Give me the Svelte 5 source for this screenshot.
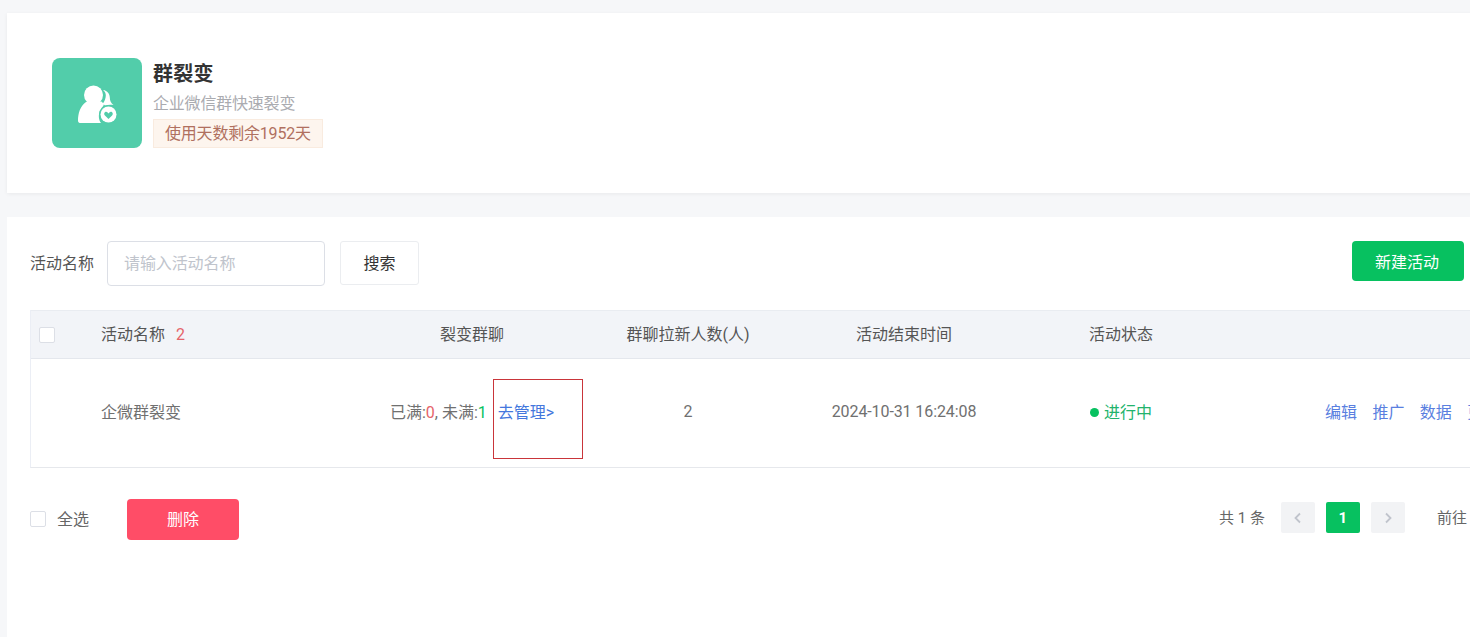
<script lang="ts">
  const columns = ['活动名称', '裂变群聊', '群聊拉新人数(人)', '活动结束时间', '活动状态'];
  const actions = ['编辑', '推广', '数据', '更多'];
</script>

<div class="page">
  <section class="app-card">
    <div class="app-icon">
      <svg width="46" height="46" viewBox="0 0 46 46" fill="#fff">
        <circle cx="19.500" cy="15" r="9.500" />
        <path d="M12 22C6 26 4 34 4 40.500 4 42.500 5 43 7 43H27c-2.500-3-3-9-.5-13 1.500-2.500 3-4 3.500-6-1-.7-1.700-1.500-2.500-2.500z" />
        <path d="M29 10c4.500.5 6.800 4 6.800 7.500 0 3 1.200 5.500 3.700 7.500-3-.7-6-.3-8.500.5-.8-.8-1.500-1.400-2.200-1.800 1.800-2.400 3-5.500 3-8.200 0-2-.7-4.100-2.800-5.500z" />
        <circle cx="34.500" cy="34.500" r="9.500" fill="#52cdaa" />
        <circle cx="34.500" cy="34.500" r="8" />
        <path d="M34.500 39l-3.600-3.500c-2-2.100.8-4.900 2.700-3l.9.900.9-.9c1.900-1.900 4.700.9 2.700 3z" fill="#52cdaa" />
      </svg>
    </div>
    <div class="app-info">
      <h1>群裂变</h1>
      <p>企业微信群快速裂变</p>
      <span class="days-tag">使用天数剩余1952天</span>
    </div>
  </section>

  <section class="list-card">
    <div class="toolbar">
      <label class="search-label" for="activity-name">活动名称</label>
      <input id="activity-name" class="search-input" placeholder="请输入活动名称" />
      <button class="search-btn">搜索</button>
      <button class="create-btn">新建活动</button>
    </div>

    <div class="table">
      <div class="row head">
        <div class="cell select"><span class="checkbox"></span></div>
        <div class="cell name">{columns[0]}<em>2</em></div>
        <div class="cell center">{columns[1]}</div>
        <div class="cell center">{columns[2]}</div>
        <div class="cell center">{columns[3]}</div>
        <div class="cell status">{columns[4]}</div>
        <div class="cell"></div>
      </div>
      <div class="row body">
        <div class="cell select"></div>
        <div class="cell name">企微群裂变</div>
        <div class="cell center">
          已满:<span class="red">0</span>, 未满:<span class="green">1</span>
          <span class="manage">去管理&gt;<i class="highlight"></i></span>
        </div>
        <div class="cell center">2</div>
        <div class="cell center date">2024-10-31 16:24:08</div>
        <div class="cell status running"><b></b>进行中</div>
        <div class="cell actions">
          {#each actions as action}
            <span>{action}</span>
          {/each}
        </div>
      </div>
    </div>

    <div class="footer">
      <span class="checkbox small"></span>
      <span class="select-all">全选</span>
      <button class="delete-btn">删除</button>
      <div class="pager">
        <span class="total">共 1 条</span>
        <span class="page-btn">
          <svg width="10" height="12" viewBox="0 0 10 12"><path d="M7 1.500 2.500 6 7 10.500" fill="none" stroke="#c0c4cc" stroke-width="1.800"/></svg>
        </span>
        <span class="page-btn active">1</span>
        <span class="page-btn">
          <svg width="10" height="12" viewBox="0 0 10 12"><path d="M3 1.500 7.500 6 3 10.500" fill="none" stroke="#c0c4cc" stroke-width="1.800"/></svg>
        </span>
        <span class="jump">前往</span>
      </div>
    </div>
  </section>
</div>

<style>
  :global(body) {
    margin: 0;
    background: #f6f7f9;
    overflow: hidden;
  }

  .page {
    width: 1470px;
    height: 637px;
    overflow: hidden;
    padding: 13px 0 0 7px;
    box-sizing: border-box;
    font-family: Roboto, "Noto Sans CJK SC", sans-serif;
    font-size: 16px;
    color: #707070;
  }

  .app-card {
    width: 1600px;
    height: 180px;
    background: #fff;
    box-shadow: 0 1px 4px rgba(0, 0, 0, 0.06);
    display: flex;
    align-items: center;
    padding-left: 45px;
    box-sizing: border-box;
    gap: 11px;
  }

  .app-icon {
    width: 90px;
    height: 90px;
    background: #52cdaa;
    border-radius: 8px;
    display: flex;
    align-items: center;
    justify-content: center;
  }

  .app-info {
    display: flex;
    flex-direction: column;
    align-items: flex-start;
    padding-top: 1px;
  }

  h1 {
    margin: 0;
    font-size: 20px;
    line-height: 30px;
    font-weight: 700;
    letter-spacing: 0.2px;
    color: #333;
  }

  .app-info p {
    margin: 0;
    line-height: 30px;
    letter-spacing: -0.2px;
    color: #aaabb0;
  }

  .days-tag {
    height: 27px;
    line-height: 27px;
    padding: 0 11px;
    background: #fdf5ee;
    border: 1px solid #f9ebdf;
    color: #b0705f;
    letter-spacing: -0.2px;
  }

  .list-card {
    width: 1600px;
    height: 420px;
    margin-top: 24px;
    background: #fff;
    padding: 24px 0 0 23px;
    box-sizing: border-box;
  }

  .toolbar {
    display: flex;
    align-items: flex-start;
    height: 69px;
  }

  .search-label {
    line-height: 46px;
    color: #555;
    margin-right: 13px;
  }

  .search-input {
    width: 218px;
    height: 45px;
    box-sizing: border-box;
    border: 1px solid #dcdfe6;
    border-radius: 4px;
    padding: 0 16px;
    font: inherit;
    letter-spacing: -0.1px;
    outline: none;
  }

  .search-input::placeholder {
    color: #c0c4cc;
  }

  .search-btn {
    width: 79px;
    height: 44px;
    margin-left: 15px;
    padding: 0 0 3px;
    background: #fff;
    border: 1px solid #ebedf0;
    border-radius: 3px;
    font: inherit;
    color: #333;
  }

  .create-btn {
    width: 112px;
    height: 40px;
    margin-left: 933px;
    padding: 0 2px 0 0;
    background: #07c160;
    border: none;
    border-radius: 4px;
    font: inherit;
    color: #fff;
  }

  .table {
    width: 1560px;
    border-left: 1px solid #ebeef5;
    border-bottom: 1px solid #e6e8ec;
  }

  .row {
    display: grid;
    grid-template-columns: 70px 260px 222px 210px 222px 212px 1fr;
    align-items: center;
  }

  .head {
    height: 49px;
    background: #f2f4f8;
    border-top: 1px solid #e9ecf1;
    border-bottom: 1px solid #e4e7ed;
    color: #555;
    box-sizing: border-box;
  }

  .body {
    height: 108px;
  }

  .name,
  .center,
  .status,
  .actions {
    padding-bottom: 4px;
  }

  .select {
    padding-left: 8px;
  }

  .checkbox {
    display: block;
    width: 14px;
    height: 14px;
    background: #fff;
    border: 1px solid #dcdfe6;
    border-radius: 2px;
  }

  .name em {
    font-style: normal;
    color: #e5646a;
    margin-left: 11px;
  }

  .center {
    text-align: center;
    white-space: nowrap;
  }

  .date {
    letter-spacing: -0.1px;
  }

  .status {
    padding-left: 75px;
  }

  .head .status {
    padding-left: 74px;
  }

  .red {
    color: #e5646a;
  }

  .green {
    color: #07c160;
  }

  .manage {
    position: relative;
    margin-left: 7px;
    color: #4477dd;
  }

  /* red annotation frame that was drawn over the screenshot */
  .highlight {
    position: absolute;
    left: -5px;
    top: -24px;
    width: 88px;
    height: 78px;
    border: 1px solid #c9353a;
  }

  .running {
    color: #22b36c;
    display: flex;
    align-items: center;
    white-space: nowrap;
  }

  .running b {
    width: 9px;
    height: 9px;
    margin: 2px 5px 0 0;
    border-radius: 50%;
    background: #07c160;
  }

  .actions {
    display: flex;
    gap: 15.4px;
    padding-left: 98px;
    color: #5a7fe0;
    white-space: nowrap;
  }

  .footer {
    display: flex;
    align-items: center;
    width: 1440px;
    height: 41px;
    margin-top: 31px;
  }

  .checkbox.small {
    margin: -1px 11px 0 0;
  }

  .select-all {
    color: #666;
    padding-bottom: 4px;
  }

  .delete-btn {
    width: 112px;
    height: 41px;
    margin-left: 38px;
    padding: 0 0 4px;
    background: #ff4d67;
    border: none;
    border-radius: 4px;
    font: inherit;
    color: #fff;
  }

  .pager {
    display: flex;
    align-items: center;
    margin-left: 980px;
    white-space: nowrap;
    margin-top: -4px;
  }

  .total {
    font-size: 15px;
    margin-right: 16px;
    padding-bottom: 3px;
    color: #666;
  }

  .page-btn {
    display: flex;
    align-items: center;
    justify-content: center;
    width: 34px;
    height: 31px;
    margin-right: 11px;
    background: #f2f3f5;
    border-radius: 2px;
  }

  .page-btn.active {
    background: #07c160;
    color: #fff;
    font-weight: 700;
    font-size: 15px;
  }

  .jump {
    margin-left: 21px;
    padding-bottom: 3px;
    font-size: 15px;
    color: #666;
  }
</style>
